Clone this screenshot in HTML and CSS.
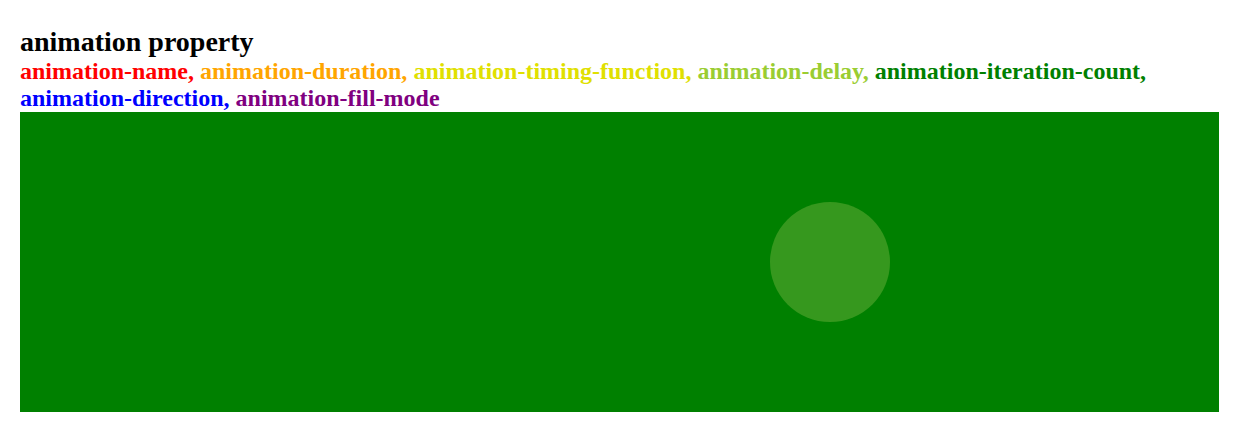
FILE: index.html
```html
<!DOCTYPE html>
<html>
<head>
<meta charset="utf-8">
<link rel="stylesheet" href="styles.css">
</head>
<body>
<h2 class="title">animation property</h2>
<p class="props"><span class="c-red">animation-name,</span> <span class="c-orange">animation-duration,</span> <span class="c-yellow">animation-timing-function,</span> <span class="c-yg">animation-delay,</span> <span class="c-green">animation-iteration-count,</span> <span class="c-blue">animation-direction,</span> <span class="c-purple">animation-fill-mode</span></p>
<div class="stage">
  <div class="ball"></div>
</div>
</body>
</html>
```
FILE: styles.css
```css
body {
  margin: 20px;
  font-family: "Liberation Serif", "Times New Roman", serif;
  background: #fff;
}
.title {
  font-size: 28px;
  font-weight: bold;
  margin: 0;
  line-height: 32px;
  padding-top: 6px;
}
.props {
  font-size: 24px;
  font-weight: bold;
  margin: 0;
  line-height: 27px;
}
.c-red { color: red; }
.c-orange { color: orange; }
.c-yellow { color: #e0e000; }
.c-yg { color: yellowgreen; }
.c-green { color: green; }
.c-blue { color: blue; }
.c-purple { color: purple; }
.stage {
  width: 1200px;
  height: 300px;
  background: green;
  position: relative;
}
.ball {
  position: absolute;
  left: 750px;
  top: 90px;
  width: 120px;
  height: 120px;
  border-radius: 50%;
  background: #36981e;
}
```
